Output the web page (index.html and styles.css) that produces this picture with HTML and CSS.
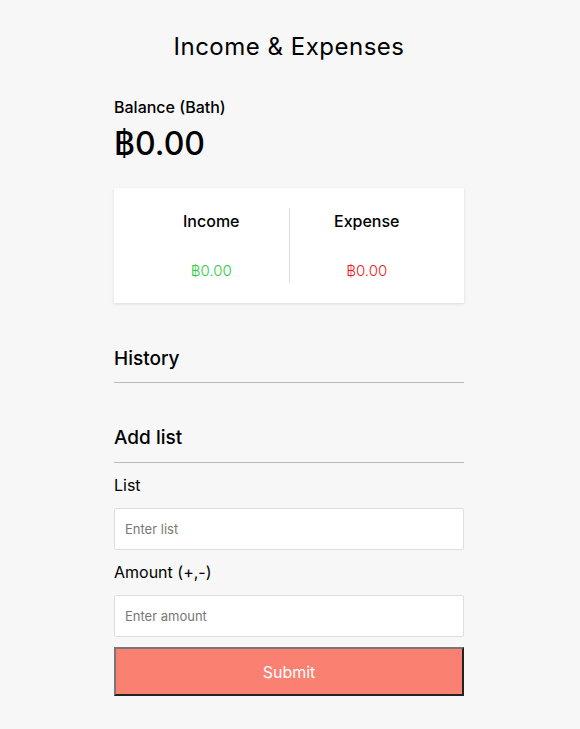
FILE: index.html
```html
<!DOCTYPE html>
<html>
<head>
<meta charset="utf-8">
<link rel="stylesheet" href="styles.css">
</head>
<body>
<h2 class="title">Income &amp; Expenses</h2>
<div class="container">
  <h4 class="bal-label">Balance (Bath)</h4>
  <h1 class="balance">฿0.00</h1>
  <div class="card">
    <div class="col">
      <h4 class="col-title">Income</h4>
      <p class="money plus">฿0.00</p>
    </div>
    <div class="col">
      <h4 class="col-title">Expense</h4>
      <p class="money minus">฿0.00</p>
    </div>
  </div>
  <h3 class="section">History</h3>
  <ul class="list"></ul>
  <h3 class="section section-add">Add list</h3>
  <form class="form">
    <label class="label">List</label>
    <input class="input" type="text" placeholder="Enter list">
    <label class="label">Amount (+,-)</label>
    <input class="input" type="number" placeholder="Enter amount">
    <button class="btn" type="button">Submit</button>
  </form>
</div>
</body>
</html>
```
FILE: styles.css
```css
* { box-sizing: border-box; }
body {
  margin: 0;
  padding-right: 2px;
  background: #f7f7f7;
  font-family: "Inter", "Open Sans", sans-serif;
  color: #000;
  display: flex;
  flex-direction: column;
  align-items: center;
}
.title {
  margin: 32px 0 0;
  font-size: 24px;
  font-weight: 400;
  line-height: 30px;
  letter-spacing: 0.5px;
}
.container {
  width: 350px;
  margin: 33px auto 30px;
}
.bal-label {
  margin: 0;
  font-size: 16px;
  font-weight: 500;
  line-height: 24px;
}
.balance {
  margin: 5px 0 0;
  font-size: 32px;
  font-weight: 500;
  line-height: 40px;
}
.card {
  margin: 24px 0 0;
  background: #fff;
  box-shadow: 0 1px 3px rgba(0,0,0,0.12);
  padding: 20px;
  display: flex;
  height: 115px;
}
.col {
  flex: 1;
  text-align: center;
}
.col:first-child { border-right: 1px solid #ddd; }
.col-title {
  margin: 2px 0 0;
  font-size: 16px;
  font-weight: 500;
  line-height: 22px;
}
.money {
  margin: 29px 0 0;
  font-size: 15px;
  font-weight: 300;
  line-height: 20px;
}
.plus { color: #2ecc40; }
.minus { color: #e81c1c; }
.section {
  margin: 44px 0 0;
  font-size: 19px;
  font-weight: 500;
  line-height: 24px;
  padding-bottom: 11px;
  border-bottom: 1px solid #bbb;
}
.section-add {
  margin-top: 43px;
  padding-bottom: 12px;
}
.list {
  margin: 0;
  padding: 0;
  list-style: none;
  height: 0;
}
.form {
  display: flex;
  flex-direction: column;
}
.label {
  margin-top: 11px;
  font-size: 16px;
  line-height: 22px;
}
.input {
  margin-top: 12px;
  height: 42px;
  border: 1px solid #dedede;
  border-radius: 2px;
  background: #fff;
  padding: 0 10px;
  font-family: inherit;
  font-size: 13px;
}
.input::placeholder { color: #777; }
.btn {
  margin-top: 10px;
  height: 49px;
  background: #fa8072;
  border: 2px solid;
  border-color: #777 #222 #222 #777;
  color: #fff;
  font-family: inherit;
  font-size: 16px;
}
```
